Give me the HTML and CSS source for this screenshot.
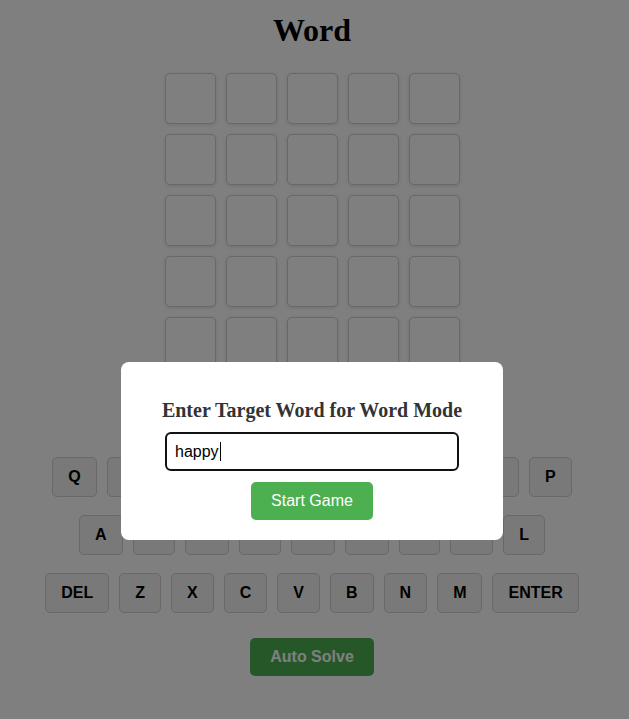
FILE: index.html
```html
<!DOCTYPE html>
<html lang="en">
<head>
<meta charset="utf-8">
<title>Word</title>
<link rel="stylesheet" href="styles.css">
</head>
<body>
<div class="app">
  <h1 class="title">Word</h1>
  <div class="board">
    <div class="tile"></div><div class="tile"></div><div class="tile"></div><div class="tile"></div><div class="tile"></div>
    <div class="tile"></div><div class="tile"></div><div class="tile"></div><div class="tile"></div><div class="tile"></div>
    <div class="tile"></div><div class="tile"></div><div class="tile"></div><div class="tile"></div><div class="tile"></div>
    <div class="tile"></div><div class="tile"></div><div class="tile"></div><div class="tile"></div><div class="tile"></div>
    <div class="tile"></div><div class="tile"></div><div class="tile"></div><div class="tile"></div><div class="tile"></div>
    <div class="tile"></div><div class="tile"></div><div class="tile"></div><div class="tile"></div><div class="tile"></div>
  </div>
  <div class="keyboard">
    <div class="krow">
      <button class="key">Q</button><button class="key">W</button><button class="key">E</button><button class="key">R</button><button class="key">T</button><button class="key">Y</button><button class="key">U</button><button class="key">I</button><button class="key">O</button><button class="key">P</button>
    </div>
    <div class="krow">
      <button class="key">A</button><button class="key">S</button><button class="key">D</button><button class="key">F</button><button class="key">G</button><button class="key">H</button><button class="key">J</button><button class="key">K</button><button class="key">L</button>
    </div>
    <div class="krow">
      <button class="key">DEL</button><button class="key">Z</button><button class="key">X</button><button class="key">C</button><button class="key">V</button><button class="key">B</button><button class="key">N</button><button class="key">M</button><button class="key">ENTER</button>
    </div>
  </div>
  <button class="auto">Auto Solve</button>
</div>
<div class="overlay">
  <div class="modal">
    <h3 class="modal-title">Enter Target Word for Word Mode</h3>
    <div class="field"><span class="field-text">happy</span><span class="caret"></span></div>
    <button class="start">Start Game</button>
  </div>
</div>
</body>
</html>
```
FILE: styles.css
```css
html, body {
  margin: 0;
  padding: 0;
  background: #ffffff;
}
body {
  font-family: "Liberation Sans", Arial, sans-serif;
  height: 719px;
  overflow: hidden;
}
.app {
  width: 624px;
  display: flex;
  flex-direction: column;
  align-items: center;
}
.title {
  font-family: "Liberation Serif", "Times New Roman", serif;
  font-size: 32px;
  font-weight: bold;
  margin: 12px 0 24px;
  color: #000;
}
.board {
  display: grid;
  grid-template-columns: repeat(5, 51px);
  grid-auto-rows: 51px;
  gap: 10px;
}
.tile {
  box-sizing: border-box;
  border: 1px solid #d0d0d0;
  border-radius: 5px;
  box-shadow: 0 1px 4px rgba(0, 0, 0, 0.12);
  background: #ffffff;
}
.keyboard {
  margin-top: 28px;
  display: flex;
  flex-direction: column;
  align-items: center;
  gap: 18px;
}
.krow {
  display: flex;
  gap: 10px;
}
.key {
  font-family: "Liberation Sans", Arial, sans-serif;
  font-size: 16px;
  font-weight: bold;
  line-height: 18px;
  padding: 10px 15px;
  border: 1px solid #d0d0d0;
  border-radius: 5px;
  background: #f2f2f2;
  color: #000;
  margin: 0;
}
.auto {
  margin-top: 25px;
  font-family: "Liberation Sans", Arial, sans-serif;
  font-size: 16px;
  font-weight: bold;
  line-height: 18px;
  padding: 10px 20px;
  border: none;
  border-radius: 5px;
  background: #4caf50;
  color: #fff;
}
.overlay {
  position: fixed;
  inset: 0;
  background: rgba(0, 0, 0, 0.5);
}
.modal {
  position: absolute;
  left: 121px;
  top: 362px;
  width: 382px;
  height: 178px;
  box-sizing: border-box;
  padding: 37px 20px 20px;
  background: #fff;
  border-radius: 8px;
  display: flex;
  flex-direction: column;
  align-items: center;
}
.modal-title {
  font-family: "Liberation Serif", "Times New Roman", serif;
  font-size: 20px;
  font-weight: bold;
  color: #333;
  margin: 0 0 10px;
  line-height: 23px;
}
.field {
  box-sizing: border-box;
  width: 294px;
  height: 39px;
  border: 2px solid #111;
  border-radius: 6px;
  padding: 0 8px;
  display: flex;
  align-items: center;
  font-size: 16px;
  color: #000;
}
.caret {
  display: inline-block;
  width: 1px;
  height: 19px;
  background: #000;
  margin-left: 1px;
}
.start {
  margin-top: 11px;
  font-family: "Liberation Sans", Arial, sans-serif;
  font-size: 16px;
  line-height: 18px;
  padding: 10px 20px;
  border: none;
  border-radius: 5px;
  background: #4caf50;
  color: #fff;
}
```
